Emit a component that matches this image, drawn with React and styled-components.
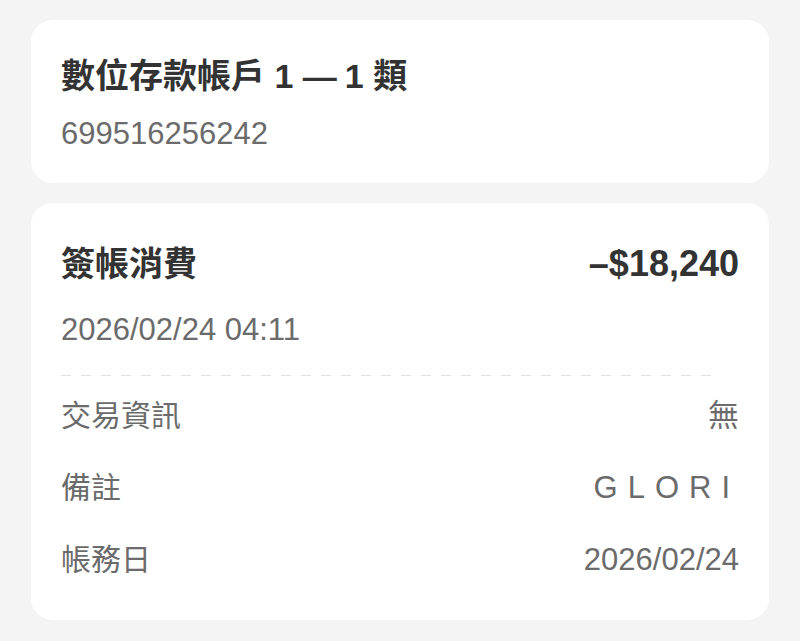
import React from 'react';
import styled, { createGlobalStyle } from 'styled-components';

const GlobalStyle = createGlobalStyle`
    html, body {
        margin: 0;
        padding: 0;
        background: #f4f4f4;
    }
    body {
        font-family: "Liberation Sans", "Noto Sans CJK TC", sans-serif;
        -webkit-font-smoothing: antialiased;
    }
`;

const Page = styled.div`
    display: flex;
    flex-direction: column;
    gap: 20px;
    padding: 20px 31px;
    min-height: 641px;
    box-sizing: border-box;
`;

const Card = styled.section`
    background: #fff;
    border-radius: 22px;
    padding: ${({ $pad }) => $pad};
    display: flex;
    flex-direction: column;
`;

const Title = styled.h1`
    margin: 0;
    font-size: 34px;
    line-height: 44px;
    font-weight: 700;
    color: #333;
`;

// the dash in the account type keeps a little air before the digit
const Dash = styled.span`
    margin-right: 8px;
`;

const Sub = styled.div`
    font-size: 31px;
    line-height: 40px;
    color: #6b6b6b;
    margin-top: ${({ $gap }) => $gap}px;
`;

const Head = styled.div`
    display: flex;
    justify-content: space-between;
    align-items: center;
`;

const Amount = styled.span`
    font-size: 36px;
    line-height: 44px;
    font-weight: 700;
    color: #333;
`;

const Divider = styled.div`
    height: 1px;
    width: calc(100% - 20px);
    margin: 25px 0 20px;
    background: repeating-linear-gradient(to right, #e2e2e2 0 10px, transparent 10px 20px);
`;

const Rows = styled.dl`
    margin: 0;
    display: flex;
    flex-direction: column;
    gap: 32px;
`;

const Row = styled.div`
    display: flex;
    justify-content: space-between;
    align-items: center;
    font-size: 31px;
    line-height: 40px;
    color: #6b6b6b;
`;

const Label = styled.dt`
    margin: 0;
    font-size: 30px;
`;

const Value = styled.dd`
    margin: 0;
    letter-spacing: ${({ $spaced }) => ($spaced ? '10px' : 'normal')};
    margin-right: ${({ $spaced }) => ($spaced ? '-1px' : '0')};
`;

const details = [
    { label: '交易資訊', value: '無' },
    { label: '備註', value: 'GLORI', spaced: true },
    { label: '帳務日', value: '2026/02/24' },
];

const App = () => (
    <>
        <GlobalStyle />
        <Page>
            <Card $pad="34px 30px 29px">
                <Title>數位存款帳戶 1 <Dash>—</Dash>1 類</Title>
                <Sub $gap={16}>699516256242</Sub>
            </Card>
            <Card $pad="39px 30px 40px">
                <Head>
                    <Title>簽帳消費</Title>
                    <Amount>–$18,240</Amount>
                </Head>
                <Sub $gap={24}>2026/02/24 04:11</Sub>
                <Divider />
                <Rows>
                    {details.map((d) => (
                        <Row key={d.label}>
                            <Label>{d.label}</Label>
                            <Value $spaced={d.spaced}>{d.value}</Value>
                        </Row>
                    ))}
                </Rows>
            </Card>
        </Page>
    </>
);

export default App;
